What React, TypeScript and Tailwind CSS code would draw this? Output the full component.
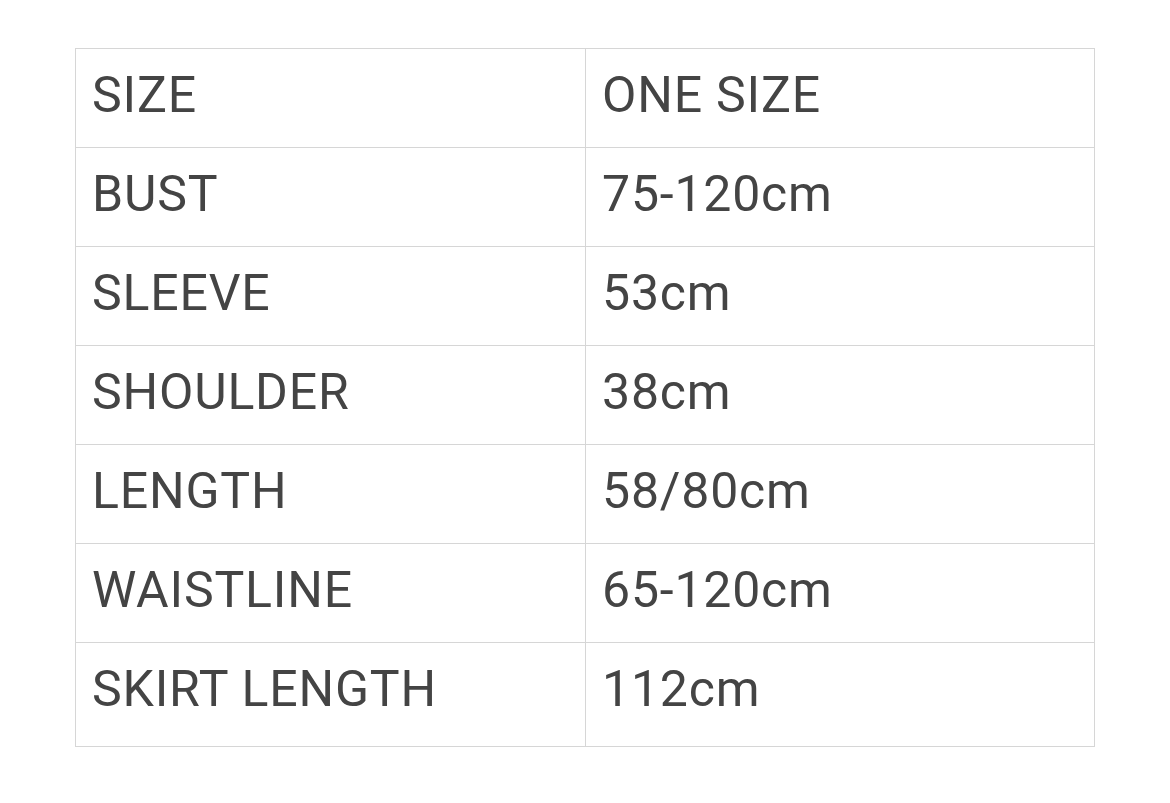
const rows: [string, string][] = [
  ['SIZE', 'ONE SIZE'],
  ['BUST', '75-120cm'],
  ['SLEEVE', '53cm'],
  ['SHOULDER', '38cm'],
  ['LENGTH', '58/80cm'],
  ['WAISTLINE', '65-120cm'],
  ['SKIRT LENGTH', '112cm'],
];

export default function App() {
  return (
    <div className="min-h-[803px] w-[1170px] bg-white pl-[75px] pt-[48px] font-['Roboto',sans-serif] text-[50px] tracking-[0.8px] text-[#444]">
      <div className="w-[1020px] border border-[#d6d6d6]">
        {rows.map(([label, value], i) => (
          <div
            key={label}
            className={
              i === rows.length - 1
                ? 'grid h-[103px] grid-cols-[510px_1fr]'
                : 'grid h-[99px] grid-cols-[510px_1fr] border-b border-[#d6d6d6]'
            }
          >
            <div className="border-r border-[#d6d6d6] pl-[16px] pt-[21px] leading-[50px]">{label}</div>
            <div className="pl-[16px] pt-[21px] leading-[50px]">{value}</div>
          </div>
        ))}
      </div>
    </div>
  );
}
